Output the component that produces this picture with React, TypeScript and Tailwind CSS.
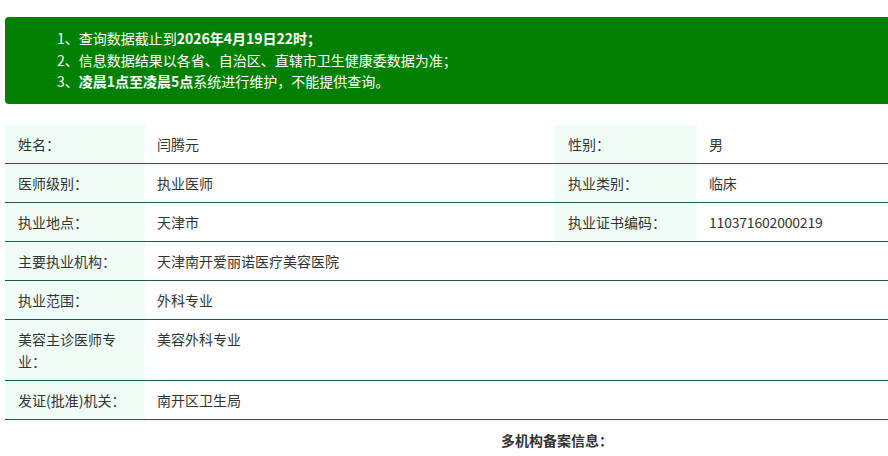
const rows: { label: string; value: string; label2?: string; value2?: string }[] = [
  { label: "姓名：", value: "闫腾元", label2: "性别：", value2: "男" },
  { label: "医师级别：", value: "执业医师", label2: "执业类别：", value2: "临床" },
  { label: "执业地点：", value: "天津市", label2: "执业证书编码：", value2: "110371602000219" },
  { label: "主要执业机构：", value: "天津南开爱丽诺医疗美容医院" },
  { label: "执业范围：", value: "外科专业" },
  { label: "美容主诊医师专业：", value: "美容外科专业" },
  { label: "发证(批准)机关：", value: "南开区卫生局" },
];

export default function App() {
  return (
    <div
      className="w-full overflow-hidden bg-white text-[14px] text-[#333]"
      style={{ fontFamily: '"Noto Sans CJK SC", "Noto Sans", sans-serif' }}
    >
      <div className="ml-[5px] w-[1096px] pt-[17px]">
        <div className="rounded-[4px] bg-[#008000] py-[11px] pl-[52px] text-[14px] leading-[21.5px] text-white">
          <p>
            1、查询数据截止到<b>2026年4月19日22时；</b>
          </p>
          <p>2、信息数据结果以各省、自治区、直辖市卫生健康委数据为准；</p>
          <p>
            3、<b>凌晨1点至凌晨5点</b>系统进行维护，不能提供查询。
          </p>
        </div>

        <table className="mt-[21px] w-full table-fixed border-collapse">
          <colgroup>
            <col className="w-[140px]" />
            <col className="w-[410px]" />
            <col className="w-[142px]" />
            <col />
          </colgroup>
          <tbody>
            {rows.map((r) => (
              <tr key={r.label} className="border-b border-[#1d5c4a] align-top leading-[22px]">
                <td className="bg-[#effdf6] px-[13px] py-[8px]">{r.label}</td>
                {r.label2 ? (
                  <>
                    <td className="px-[12px] py-[8px]">{r.value}</td>
                    <td className="bg-[#effdf6] px-[13px] py-[8px]">{r.label2}</td>
                    <td className="px-[12px] py-[8px] tracking-[-0.2px]">{r.value2}</td>
                  </>
                ) : (
                  <td colSpan={3} className="px-[12px] py-[8px]">
                    {r.value}
                  </td>
                )}
              </tr>
            ))}
          </tbody>
        </table>

        <div className="mt-[9px] pl-[8px] text-center font-bold leading-[22px]">多机构备案信息：</div>
      </div>
    </div>
  );
}
